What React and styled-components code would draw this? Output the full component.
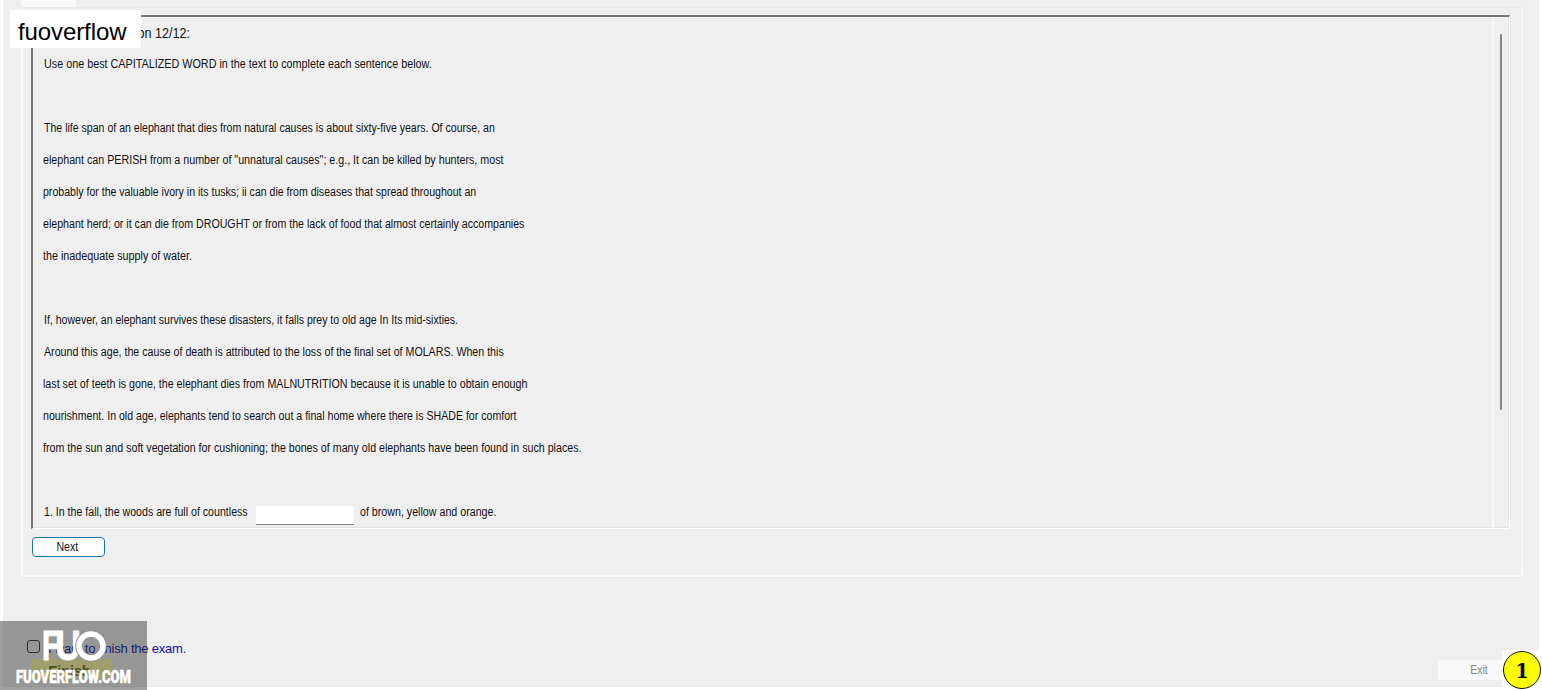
import React from 'react';
import styled, { createGlobalStyle } from 'styled-components';

const passage = [
    { text: 'Use one best CAPITALIZED WORD in the text to complete each sentence below.', indent: 1, stretch: 0.899 },
    { text: '' },
    { text: 'The life span of an elephant that dies from natural causes is about sixty-five years. Of course, an', indent: 1, stretch: 0.88 },
    { text: 'elephant can PERISH from a number of "unnatural causes"; e.g., It can be killed by hunters, most', stretch: 0.891 },
    { text: 'probably for the valuable ivory in its tusks; ii can die from diseases that spread throughout an', stretch: 0.88 },
    { text: 'elephant herd; or it can die from DROUGHT or from the lack of food that almost certainly accompanies', stretch: 0.886 },
    { text: 'the inadequate supply of water.', stretch: 0.897 },
    { text: '' },
    { text: 'If, however, an elephant survives these disasters, it falls prey to old age In Its mid-sixties.', indent: 1, stretch: 0.878 },
    { text: 'Around this age, the cause of death is attributed to the loss of the final set of MOLARS. When this', indent: 1, stretch: 0.887 },
    { text: 'last set of teeth is gone, the elephant dies from MALNUTRITION because it is unable to obtain enough', stretch: 0.89 },
    { text: 'nourishment. In old age, elephants tend to search out a final home where there is SHADE for comfort', stretch: 0.883 },
    { text: 'from the sun and soft vegetation for cushioning; the bones of many old elephants have been found in such places.', stretch: 0.89 },
    { text: '' },
];

function Question() {
    return (
        <Viewer>
            <Content>
                <QuestionTitle>Question 12/12:</QuestionTitle>
                {passage.map((line, i) => (
                    <Line key={i} $indent={line.indent}>
                        <Part $stretch={line.stretch}>{line.text}</Part>
                    </Line>
                ))}
                <Line $indent={1}>
                    <Part $width={212} $stretch={0.885}>1. In the fall, the woods are full of countless</Part>
                    <Blank />
                    <Part $stretch={0.889}>of brown, yellow and orange.</Part>
                </Line>
            </Content>
            <ScrollTrack>
                <ScrollThumb />
            </ScrollTrack>
        </Viewer>
    );
}

function Logo() {
    return (
        <LogoBox>
            <svg width="147" height="69" viewBox="0 0 147 69">
                <g fill="#fff" stroke="#fff" strokeWidth="0.8" fontFamily="Inter, sans-serif" fontWeight="700" fontSize="39">
                    <text x="42" y="39" textLength="17" lengthAdjust="spacingAndGlyphs">F</text>
                    <text x="55" y="39" textLength="26" lengthAdjust="spacingAndGlyphs">U</text>
                </g>
                <circle cx="91" cy="25" r="12" fill="none" stroke="#929292" strokeWidth="7.500" />
                <circle cx="91" cy="25" r="12" fill="none" stroke="#fff" strokeWidth="5.500" />
                <text
                    x="16" y="62" fill="#fff" stroke="#fff" strokeWidth="0.5"
                    fontFamily="Roboto, sans-serif" fontWeight="900" fontSize="18"
                    textLength="115" lengthAdjust="spacingAndGlyphs"
                >FUOVERFLOW.COM</text>
            </svg>
        </LogoBox>
    );
}

function App() {
    return (
        <Page>
            <GlobalStyle />
            <Window>
                <Tab />
                <GroupBox>
                    <Question />
                    <NextButton><Caption>Next</Caption></NextButton>
                </GroupBox>
                <Footer>
                    <FinishArea>
                        <FinishLabel>
                            <Check />
                            I want to finish the exam.
                        </FinishLabel>
                        <FinishButton>Finish</FinishButton>
                    </FinishArea>
                    <ExitButton><Caption>Exit</Caption></ExitButton>
                </Footer>
            </Window>
            <NameTag>fuoverflow</NameTag>
            <Logo />
            <BadgeBack>
                <Badge>1</Badge>
            </BadgeBack>
        </Page>
    );
}

const GlobalStyle = createGlobalStyle`
    *{
        box-sizing: border-box;
    }
    body{
        margin: 0;
        background: #fff;
        font-family: 'Liberation Sans', Arial, sans-serif;
        font-size: 12px;
        color: #111;
        overflow: hidden;
    }
`;

const Page = styled.div`
    position: relative;
    height: 690px;
    padding: 0 3px;
`;

const Window = styled.main`
    display: flex;
    flex-direction: column;
    height: 687px;
    background: #efefef;
    border-bottom: 1px solid #e9e9e9;
`;

const Tab = styled.div`
    width: 55px;
    height: 7px;
    margin-left: 18px;
    background: #f8f8f8;
`;

const GroupBox = styled.section`
    width: 1502px;
    height: 570px;
    margin-left: 18px;
    padding: 7px 10px;
    border: 1px solid #e8e8e8;
    border-left: 2px solid #f8f8f8;
    border-right: 2px solid #f6f6f6;
    border-bottom: 2px solid #f7f7f7;
    box-shadow: 0 1px 0 #e9e9e9;
    flex: none;
    display: flex;
    flex-direction: column;
    align-items: flex-start;
`;

const Viewer = styled.div`
    display: flex;
    width: 1479px;
    height: 514px;
    margin-left: -2px;
    border-top: 2px solid #767676;
    border-left: 2px solid #767676;
    border-right: 1px solid #fff;
    border-bottom: 1px solid #fff;
    box-shadow: inset -1px -1px 0 #e2e2e2;
    flex: none;
    overflow: hidden;
`;

const Content = styled.div`
    flex: 1;
    padding: 1px 0 0 10px;
`;

const QuestionTitle = styled.h1`
    width: max-content;
    margin: 0 0 0 58px;
    height: 30px;
    font-size: 14px;
    font-weight: 400;
    line-height: 31px;
    transform: scaleX(0.9);
    transform-origin: left;
`;

const Line = styled.div`
    display: flex;
    align-items: center;
    height: 32px;
    line-height: 32px;
    padding-left: ${(p) => p.$indent || 0}px;
    white-space: pre;
`;

const Part = styled.span`
    width: ${(p) => (p.$width ? `${p.$width}px` : 'auto')};
    transform: scaleX(${(p) => p.$stretch || 1});
    transform-origin: left;
`;

const Blank = styled.input`
    width: 98px;
    height: 19px;
    margin: 6px 6px 0 0;
    padding: 0 4px;
    border: 0;
    border-bottom: 1px solid #858585;
    background: #fff;
`;

const ScrollTrack = styled.div`
    display: flex;
    justify-content: center;
    width: 17px;
    padding-top: 17px;
    border-left: 2px solid #f7f7f7;
    border-right: 1px solid #e9e9e9;
`;

const ScrollThumb = styled.div`
    width: 2px;
    height: 376px;
    border-radius: 1px;
    background: #858585;
`;

const Button = styled.button`
    padding: 0;
    font: inherit;
`;

const Caption = styled.span`
    display: inline-block;
    transform: scaleX(0.88);
`;

const NextButton = styled(Button)`
    width: 73px;
    height: 20px;
    margin: 8px 0 0 -1px;
    padding-right: 2px;
    border: 1px solid #1878a8;
    border-radius: 4px;
    background: #fff;
    color: #111;
    box-shadow: 0 0 2px #d8f0fa;
`;

const Footer = styled.footer`
    display: flex;
    flex: 1;
    justify-content: space-between;
    align-items: flex-start;
    padding: 62px 36px 0 24px;
`;

const FinishArea = styled.div`
    width: 200px;
`;

const FinishLabel = styled.label`
    display: flex;
    align-items: center;
    height: 18px;
    font-size: 13px;
    letter-spacing: -0.22px;
    color: #1010a0;
    white-space: nowrap;
`;

const Check = styled.span`
    width: 13px;
    height: 13px;
    margin: 0 8px 4px 0;
    border: 1px solid #333;
    border-radius: 3px;
    background: #f0f0f0;
`;

const FinishButton = styled(Button)`
    width: 81px;
    height: 20px;
    margin: 2px 0 0 4px;
    padding: 2px 4px 0 0;
    border: 0;
    background: #ffffa0;
    color: #68681c;
    font-size: 15px;
    font-weight: 700;
    letter-spacing: -0.3px;
`;

const ExitButton = styled(Button)`
    width: 65px;
    height: 20px;
    margin-top: 21px;
    padding-left: 17px;
    border: 0;
    background: #f9f9f9;
    color: #858585;
`;

const NameTag = styled.div`
    position: absolute;
    left: 10px;
    top: 10px;
    width: 131px;
    height: 38px;
    padding-left: 8px;
    background: #fff;
    color: #000;
    font-size: 24px;
    line-height: 43px;
    letter-spacing: -0.1px;
`;

const LogoBox = styled.div`
    position: absolute;
    left: 0;
    bottom: 0;
    width: 147px;
    height: 69px;
    background: rgba(43, 43, 43, 0.45);

    svg{
        display: block;
    }
`;

const BadgeBack = styled.div`
    position: absolute;
    right: 0;
    bottom: 0;
    width: 40px;
    height: 40px;
    padding: 1px;
    background: #fff;
`;

const Badge = styled.div`
    width: 38px;
    height: 38px;
    border: 1px solid #111;
    border-radius: 50%;
    background: #ff0;
    color: #000;
    font: 700 21px/37px 'DejaVu Serif Condensed', 'DejaVu Serif', serif;
    font-stretch: condensed;
    text-align: center;
`;

export default App;
